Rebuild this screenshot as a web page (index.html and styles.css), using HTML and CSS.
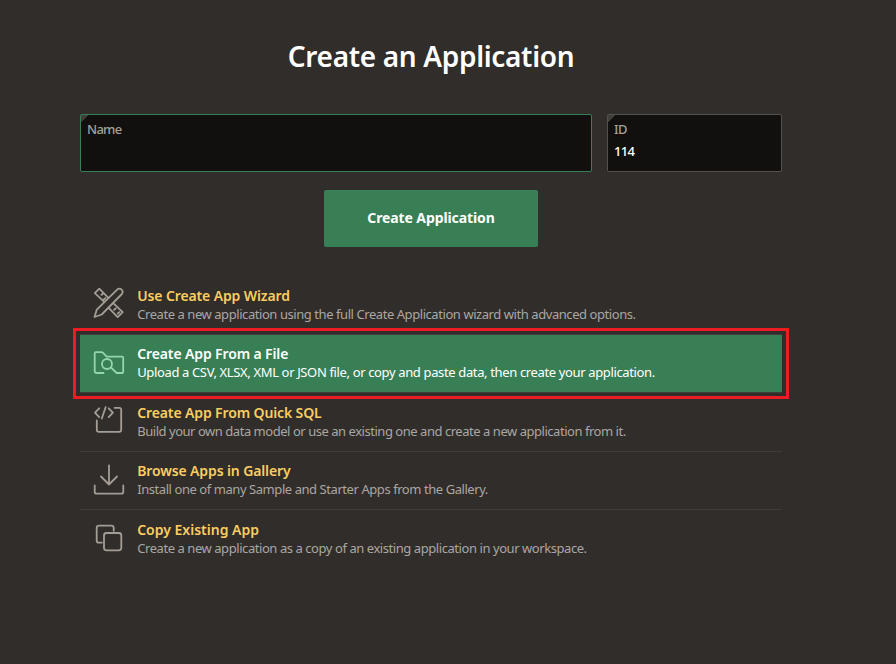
FILE: index.html
```html
<!DOCTYPE html>
<html lang="en">
<head>
<meta charset="utf-8">
<title>Create an Application</title>
<link rel="stylesheet" href="styles.css">
</head>
<body>
<main class="page">
  <h1 class="title">Create an Application</h1>
  <form class="fields">
    <label class="field field-name"><span class="label">Name</span></label>
    <label class="field field-id"><span class="label">ID</span><span class="value">114</span></label>
  </form>
  <button class="create" type="button">Create Application</button>
  <ul class="options">
    <li class="option wizard">
      <svg class="icon" viewBox="0 0 32 32"><path d="M11.5 15.2 1.8 6.2 6.3 1.7 15.3 10.8M8.500 7.800 9.800 6.700M12.300 11.200 10.800 12.500M20.5 16.3l9.200 8.800-5 5-9-9.300M21.200 22.800l1.500-1.300M24.800 26.500l1.600-1.400M1.500 30l2.300-7.400L24.400 2.300q2.200-1.500 4.200.3 2 2 .3 4.400L8.700 27.500Z"/></svg>
      <div class="text"><strong>Use Create App Wizard</strong><span>Create a new application using the full Create Application wizard with advanced options.</span></div>
    </li>
    <li class="option file selected">
      <svg class="icon" viewBox="0 0 32 32"><path d="M10.500 26H3.700Q1.700 26 1.700 24V6.200Q1.700 5.200 2.700 5.200h5.700q1 0 1.700.7l3.600 3.700h15.500q1 0 1 1V25q0 1-1 1h-5.500L17.900 20.500"/><circle cx="14" cy="17" r="5"/></svg>
      <div class="text"><strong>Create App From a File</strong><span>Upload a CSV, XLSX, XML or JSON file, or copy and paste data, then create your application.</span></div>
    </li>
    <li class="option sql">
      <svg class="icon" viewBox="0 0 32 32"><path d="M6.2 3.300 2 7.700l4.200 4.400M12.700 2 8.800 13.500M15.700 3.300l4.200 4.400-4.200 4.400M21.600 2.800h4.600q2 0 2 2v20q0 2-2 2H5.800q-2 0-2-2v-9.300"/></svg>
      <div class="text"><strong>Create App From Quick SQL</strong><span>Build your own data model or use an existing one and create a new application from it.</span></div>
    </li>
    <li class="option gallery">
      <svg class="icon" viewBox="0 0 32 32"><path d="M16 1.500v18.700M8 12.500l8 8 8-8M1.700 21.500v6.200q0 2 2 2h24.600q2 0 2-2v-6.200"/></svg>
      <div class="text"><strong>Browse Apps in Gallery</strong><span>Install one of many Sample and Starter Apps from the Gallery.</span></div>
    </li>
    <li class="option copy">
      <svg class="icon" viewBox="0 0 32 32"><path d="M8.800 20.700H6q-2.300 0-2.300-2.300V6Q3.700 3.700 6 3.700h12.400q2.300 0 2.300 2.300v2.800"/><rect x="11" y="11" width="17.300" height="17.300" rx="2.500"/></svg>
      <div class="text"><strong>Copy Existing App</strong><span>Create a new application as a copy of an existing application in your workspace.</span></div>
    </li>
  </ul>
</main>
</body>
</html>
```
FILE: styles.css
```css
* { box-sizing: border-box; }
body {
  margin: 0;
  min-height: 664px;
  background: #312d2a;
  color: #fff;
  font-family: "Noto Sans", "Open Sans", sans-serif;
}
.page {
  width: 702px;
  margin-left: 80px;
  padding-top: 36px;
  display: flex;
  flex-direction: column;
}
.title {
  margin: 0;
  height: 78px;
  text-align: center;
  font-size: 28px;
  font-weight: 600;
  line-height: 40px;
  letter-spacing: -0.33px;
}
.fields { display: flex; gap: 15px; height: 58px; }
.field {
  display: flex;
  flex-direction: column;
  padding: 4px 6px;
  border: 1px solid #55504b;
  border-radius: 2px;
  background: linear-gradient(135deg, #403e3b 5px, #11100e 5.5px);
}
.field-name { width: 512px; border-color: #387f56; }
.field-id { width: 175px; }
.label { font-size: 13px; line-height: 20px; font-weight: 500; color: #a3a09c; letter-spacing: -0.7px; }
.value { font-size: 13px; line-height: 24px; letter-spacing: -0.7px; font-weight: 500; }
.create {
  align-self: center;
  width: 214px;
  height: 57px;
  margin-top: 18px;
  padding: 0 0 2px;
  border: 0;
  border-radius: 2px;
  background: #397f56;
  color: #fff;
  font: 700 14px "Noto Sans", sans-serif;
  letter-spacing: -0.1px;
}
.options { list-style: none; margin: 29px 0 0; padding: 0; }
.option {
  display: flex;
  height: 59px;
  padding: 11px 0 0 13px;
  border-bottom: 1px solid #403c38;
}
.option:nth-child(even) { height: 58px; padding-top: 10px; }
.option:last-child { border: 0; }
.option.selected { position: relative; background-color: #397f56; background-clip: padding-box; }
.option.selected::after {
  content: "";
  position: absolute;
  inset: -7px;
  border: 3px solid #ed1c24;
}
.icon {
  width: 32px;
  height: 32px;
  margin-top: 1px;
  flex: none;
  fill: none;
  stroke: #a49d95;
  stroke-width: 1.8;
  stroke-linecap: round;
  stroke-linejoin: round;
}
.wizard .icon { margin-top: 0; }
.gallery .icon { margin-top: 2px; }
.selected .icon { margin-top: 2px; stroke: #95d5ac; }
.text { display: flex; flex-direction: column; align-items: flex-start; margin-left: 12.2px; white-space: nowrap; }
.text strong { font-size: 14px; line-height: 18px; font-weight: 600; color: #facd62; letter-spacing: -0.12px; }
.text span { font-size: 13px; line-height: 18px; color: #aaa7a3; letter-spacing: -0.435px; }
.copy strong { letter-spacing: 0; }
.file span { letter-spacing: -0.36px; }
.sql span { letter-spacing: -0.465px; }
.selected .text strong, .selected .text span { color: #fff; }
```
